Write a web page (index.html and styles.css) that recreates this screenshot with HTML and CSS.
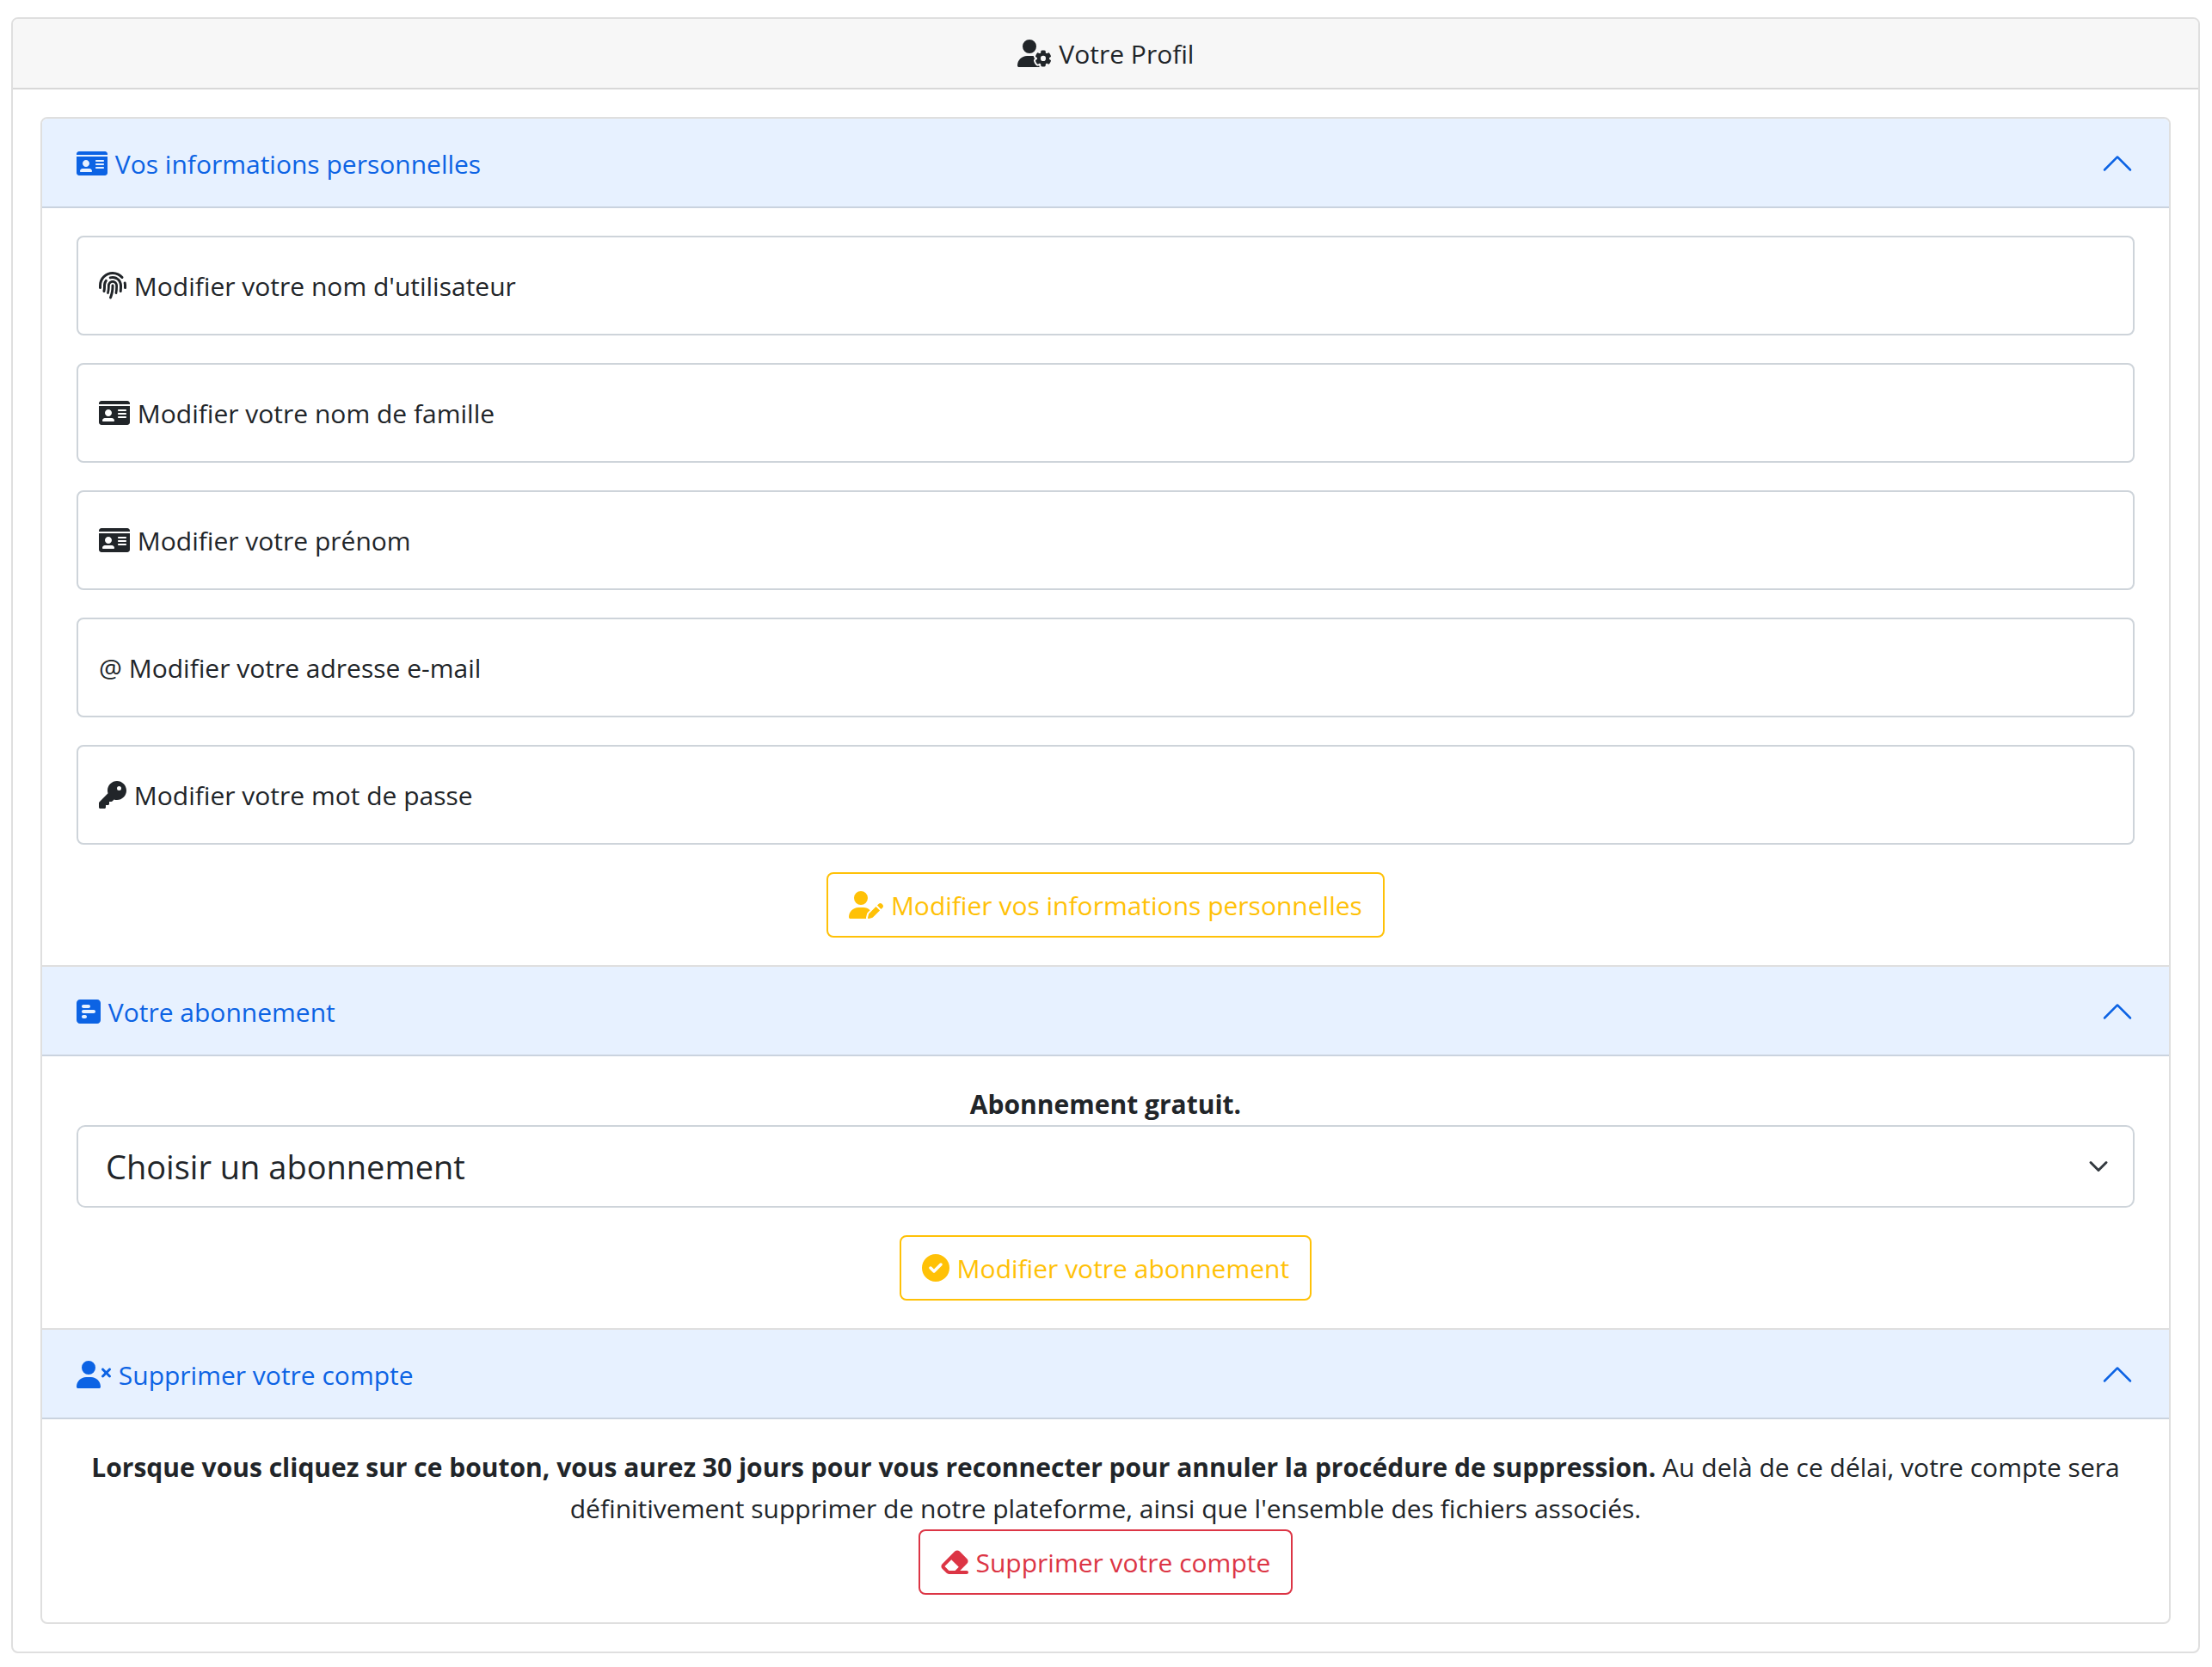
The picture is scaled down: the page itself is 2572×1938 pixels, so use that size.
FILE: index.html
```html
<!DOCTYPE html>
<html lang="fr">
<head>
<meta charset="utf-8">
<title>Votre Profil</title>
<link rel="stylesheet" href="styles.css">
</head>
<body>
<svg class="sprite" aria-hidden="true">
  <symbol id="user-gear" viewBox="0 0 640 512"><path d="M224 0a128 128 0 1 1 0 256A128 128 0 1 1 224 0zM178.3 304h91.4c11.8 0 23.4 1.2 34.5 3.3c-2.1 18.5 7.4 35.6 21.8 44.8c-16.6 10.6-26.7 31.6-20 53.3c4 12.9 9.4 25.5 16.4 37.6s15.2 23.1 24.4 33c15.7 16.9 39.6 18.4 57.2 8.7v.9c0 9.2 2.7 18.5 7.9 26.3H29.7C13.3 512 0 498.7 0 482.3C0 383.8 79.8 304 178.3 304zM436 218.2c0-7 4.5-13.3 11.3-14.8c10.5-2.4 21.5-3.7 32.7-3.7s22.2 1.3 32.7 3.7c6.8 1.5 11.3 7.8 11.3 14.8v17.7c0 7.8 4.8 14.8 11.6 18.7c6.8 3.9 15.1 4.5 21.8 .6l13.8-7.9c6.1-3.5 13.7-2.7 18.5 2.4c7.6 8.1 14.3 17.2 20.1 27.2s10.3 20.4 13.5 31c2.1 6.7-1.1 13.7-7.2 17.2l-14.4 8.3c-6.5 3.7-10 10.9-10 18.4s3.5 14.7 10 18.4l14.4 8.3c6.1 3.5 9.2 10.5 7.2 17.2c-3.3 10.6-7.8 21-13.5 31s-12.5 19.1-20.1 27.2c-4.8 5.1-12.5 5.9-18.5 2.4l-13.8-7.9c-6.7-3.9-15.1-3.3-21.8 .6c-6.8 3.9-11.6 10.9-11.6 18.7v17.7c0 7-4.5 13.3-11.3 14.8c-10.5 2.4-21.5 3.7-32.7 3.7s-22.2-1.3-32.7-3.7c-6.8-1.5-11.3-7.8-11.3-14.8V467.8c0-7.9-4.9-14.9-11.7-18.9c-6.8-3.9-15.2-4.5-22-.6l-13.5 7.8c-6.1 3.5-13.7 2.7-18.5-2.4c-7.6-8.1-14.3-17.2-20.1-27.2s-10.3-20.4-13.5-31c-2.1-6.7 1.1-13.7 7.2-17.2l14-8.1c6.5-3.8 10.1-11.1 10.1-18.6s-3.5-14.8-10.1-18.6l-14-8.1c-6.1-3.5-9.2-10.5-7.2-17.2c3.3-10.6 7.7-21 13.5-31s12.5-19.1 20.1-27.2c4.8-5.1 12.4-5.9 18.5-2.4l13.6 7.8c6.8 3.9 15.2 3.3 22-.6c6.9-3.9 11.7-11 11.7-18.9V218.2zm92.1 133.5a48.1 48.1 0 1 0 -96.1 0 48.1 48.1 0 1 0 96.1 0z"/></symbol>
  <symbol id="id-card" viewBox="0 0 576 512"><path d="M528 32h-480C21.49 32 0 53.49 0 80V96h576V80C576 53.49 554.5 32 528 32zM0 432C0 458.5 21.49 480 48 480h480c26.51 0 48-21.49 48-48V128H0V432zM368 192h128C504.8 192 512 199.2 512 208S504.8 224 496 224h-128C359.2 224 352 216.8 352 208S359.2 192 368 192zM368 256h128C504.8 256 512 263.2 512 272S504.8 288 496 288h-128C359.2 288 352 280.8 352 272S359.2 256 368 256zM368 320h128c8.836 0 16 7.164 16 16S504.8 352 496 352h-128c-8.836 0-16-7.164-16-16S359.2 320 368 320zM176 192c35.35 0 64 28.66 64 64s-28.65 64-64 64s-64-28.66-64-64S140.7 192 176 192zM112 352h128c26.51 0 48 21.49 48 48c0 8.836-7.164 16-16 16h-192C71.16 416 64 408.8 64 400C64 373.5 85.49 352 112 352z"/></symbol>
  <symbol id="fingerprint" viewBox="0 0 512 512"><path d="M48 256C48 141.1 141.1 48 256 48c63.1 0 119.6 28.1 157.8 72.5c8.6 10.1 23.8 11.2 33.8 2.6s11.2-23.8 2.6-33.8C403.3 34.6 333.7 0 256 0C114.6 0 0 114.6 0 256v40c0 13.3 10.7 24 24 24s24-10.7 24-24V256zm458.5-52.9c-2.7-13-15.5-21.3-28.4-18.5s-21.3 15.5-18.5 28.4c2.9 13.9 4.5 28.3 4.5 43.1v40c0 13.3 10.7 24 24 24s24-10.7 24-24V256c0-18.1-1.9-35.8-5.5-52.9zM256 80c-19 0-37.4 3-54.5 8.6c-15.2 5-18.7 23.7-8.3 35.9c7.1 8.3 18.8 10.8 29.4 7.9c10.6-2.9 21.8-4.4 33.4-4.4c70.7 0 128 57.3 128 128v24.9c0 25.2-1.5 50.3-4.4 75.3c-1.7 14.6 9.4 27.8 24.2 27.8c11.8 0 21.9-8.6 23.3-20.3c3.3-27.4 5-55 5-82.7V256c0-97.2-78.8-176-176-176zM150.7 148.7c-9.1-10.6-25.3-11.4-33.9-.4C93.7 178 80 215.4 80 256v24.9c0 24.2-2.6 48.4-7.8 71.9C68.8 368.4 80.1 384 96.1 384c10.5 0 19.9-7 22.2-17.3c6.4-28.1 9.7-56.8 9.7-85.8V256c0-27.2 8.5-52.4 22.9-73.1c7.2-10.4 8-24.6-.2-34.2zM256 160c-53 0-96 43-96 96v24.9c0 35.9-4.6 71.5-13.8 106.1c-3.8 14.3 6.7 29 21.5 29c9.5 0 17.9-6.2 20.4-15.4c10.5-39 15.9-79.2 15.9-119.7V256c0-28.7 23.3-52 52-52s52 23.3 52 52v24.9c0 36.3-3.5 72.4-10.4 107.9c-2.7 13.9 7.7 27.2 21.8 27.2c10.2 0 19-7 21-17c7.7-38.8 11.6-78.3 11.6-118.1V256c0-53-43-96-96-96zm24 96c0-13.3-10.7-24-24-24s-24 10.7-24 24v24.9c0 59.9-11 119.3-32.5 175.2l-5.9 15.3c-4.8 12.4 1.4 26.3 13.8 31s26.3-1.4 31-13.8l5.9-15.3C267.9 411.9 280 346.7 280 280.9V256z"/></symbol>
  <symbol id="key" viewBox="0 0 512 512"><path d="M336 352c97.2 0 176-78.8 176-176S433.2 0 336 0S160 78.8 160 176c0 18.7 2.9 36.8 8.3 53.7L7 391c-4.5 4.5-7 10.6-7 17v80c0 13.3 10.7 24 24 24h80c13.3 0 24-10.7 24-24V448h40c13.3 0 24-10.7 24-24V384h40c6.4 0 12.5-2.5 17-7l33.3-33.3c16.9 5.4 35 8.3 53.7 8.3zM376 96a40 40 0 1 1 0 80 40 40 0 1 1 0-80z"/></symbol>
  <symbol id="user-pen" viewBox="0 0 640 512"><path d="M224 256A128 128 0 1 0 224 0a128 128 0 1 0 0 256zm-45.7 48C79.8 304 0 383.8 0 482.3C0 498.7 13.3 512 29.7 512H322.8c-3.1-8.8-3.7-18.4-1.4-27.8l15-60.1c2.8-11.3 8.6-21.5 16.8-29.7l40.3-40.3c-32.1-31-75.7-50.1-123.9-50.1H178.3zm435.5-68.3c-15.6-15.6-40.9-15.6-56.6 0l-29.4 29.4 71 71 29.4-29.4c15.6-15.6 15.6-40.9 0-56.6l-14.4-14.4zM375.9 417c-4.1 4.1-7 9.2-8.4 14.9l-15 60.1c-1.4 5.5 .2 11.2 4.2 15.2s9.7 5.6 15.2 4.2l60.1-15c5.6-1.4 10.8-4.3 14.9-8.4L576.1 358.7l-71-71L375.9 417z"/></symbol>
  <symbol id="poll" viewBox="0 0 448 512"><path d="M448 96c0-35.3-28.7-64-64-64L64 32C28.7 32 0 60.7 0 96L0 416c0 35.3 28.7 64 64 64l320 0c35.3 0 64-28.7 64-64l0-320zM256 160c0 17.7-14.3 32-32 32l-96 0c-17.7 0-32-14.3-32-32s14.3-32 32-32l96 0c17.7 0 32 14.3 32 32zm64 64c17.7 0 32 14.3 32 32s-14.3 32-32 32l-192 0c-17.7 0-32-14.3-32-32s14.3-32 32-32l192 0zM192 352c0 17.7-14.3 32-32 32l-32 0c-17.7 0-32-14.3-32-32s14.3-32 32-32l32 0c17.7 0 32 14.3 32 32z"/></symbol>
  <symbol id="circle-check" viewBox="0 0 512 512"><path d="M256 512A256 256 0 1 0 256 0a256 256 0 1 0 0 512zM371.8 211.8C382.7 200.9 382.7 183.1 371.8 172.2C360.9 161.3 343.1 161.3 332.2 172.2L224 280.4L179.8 236.2C168.9 225.3 151.1 225.3 140.2 236.2C129.3 247.1 129.3 264.9 140.2 275.8L204.2 339.8C215.1 350.7 232.9 350.7 243.8 339.8L371.8 211.8z" fill-rule="evenodd"/></symbol>
  <symbol id="user-xmark" viewBox="0 0 640 512"><path d="M96 128a128 128 0 1 1 256 0A128 128 0 1 1 96 128zM0 482.3C0 383.8 79.8 304 178.3 304h91.4C368.2 304 448 383.8 448 482.3c0 16.4-13.3 29.7-29.7 29.7H29.7C13.3 512 0 498.7 0 482.3zM471 143c9.4-9.4 24.6-9.4 33.9 0l47 47 47-47c9.4-9.4 24.6-9.4 33.9 0s9.4 24.6 0 33.9l-47 47 47 47c9.4 9.4 9.4 24.6 0 33.9s-24.6 9.4-33.9 0l-47-47-47 47c-9.4 9.4-24.6 9.4-33.9 0s-9.4-24.6 0-33.9l47-47-47-47c-9.4-9.4-9.4-24.6 0-33.9z"/></symbol>
  <symbol id="eraser" viewBox="0 0 512 512"><path d="M480 416C497.7 416 512 430.3 512 448C512 465.7 497.7 480 480 480H150.6C133.7 480 117.4 473.3 105.4 461.3L25.37 381.3C.3786 356.3 .3786 315.7 25.37 290.7L258.7 57.37C283.7 32.38 324.3 32.38 349.3 57.37L486.6 194.7C511.6 219.7 511.6 260.3 486.6 285.3L355.9 416H480zM265.4 416L332.7 348.7L195.3 211.3L70.63 336L150.6 416L265.4 416z" fill-rule="evenodd"/></symbol>
  <symbol id="chevron" viewBox="0 0 16 16"><path fill-rule="evenodd" d="M14.354 11.354a.5.5 0 0 1-.708 0L8 5.707l-5.646 5.647a.5.5 0 0 1-.708-.708l6-6a.5.5 0 0 1 .708 0l6 6a.5.5 0 0 1 0 .708z"/></symbol>
</svg>

<main class="card">
  <h1 class="card-header"><svg class="icon icon-xl"><use href="#user-gear"/></svg> Votre Profil</h1>
  <div class="card-body">
    <div class="accordion">

      <section class="accordion-item">
        <h2 class="accordion-header">
          <button class="accordion-button" type="button" aria-expanded="true" aria-controls="panel-infos">
            <span class="accordion-title"><svg class="icon icon-lg"><use href="#id-card"/></svg> Vos informations personnelles</span>
            <svg class="chevron"><use href="#chevron"/></svg>
          </button>
        </h2>
        <form class="accordion-body fields" id="panel-infos">
          <div class="field">
            <input class="field-input" type="text" id="username">
            <label class="field-label" for="username"><svg class="icon"><use href="#fingerprint"/></svg> Modifier votre nom d'utilisateur</label>
          </div>
          <div class="field">
            <input class="field-input" type="text" id="lastname">
            <label class="field-label" for="lastname"><svg class="icon icon-lg"><use href="#id-card"/></svg> Modifier votre nom de famille</label>
          </div>
          <div class="field">
            <input class="field-input" type="text" id="firstname">
            <label class="field-label" for="firstname"><svg class="icon icon-lg"><use href="#id-card"/></svg> Modifier votre prénom</label>
          </div>
          <div class="field">
            <input class="field-input" type="email" id="email">
            <label class="field-label" for="email">@ Modifier votre adresse e-mail</label>
          </div>
          <div class="field">
            <input class="field-input" type="password" id="password">
            <label class="field-label" for="password"><svg class="icon"><use href="#key"/></svg> Modifier votre mot de passe</label>
          </div>
          <button class="btn btn-warning" type="submit"><svg class="icon icon-xl"><use href="#user-pen"/></svg> Modifier vos informations personnelles</button>
        </form>
      </section>

      <section class="accordion-item">
        <h2 class="accordion-header">
          <button class="accordion-button" type="button" aria-expanded="true" aria-controls="panel-plan">
            <span class="accordion-title"><svg class="icon icon-sm"><use href="#poll"/></svg> Votre abonnement</span>
            <svg class="chevron"><use href="#chevron"/></svg>
          </button>
        </h2>
        <form class="accordion-body" id="panel-plan">
          <label class="plan-label" for="plan">Abonnement gratuit.</label>
          <select class="select" id="plan">
            <option>Choisir un abonnement</option>
          </select>
          <button class="btn btn-warning" type="submit"><svg class="icon"><use href="#circle-check"/></svg> Modifier votre abonnement</button>
        </form>
      </section>

      <section class="accordion-item">
        <h2 class="accordion-header">
          <button class="accordion-button" type="button" aria-expanded="true" aria-controls="panel-delete">
            <span class="accordion-title"><svg class="icon icon-xl"><use href="#user-xmark"/></svg> Supprimer votre compte</span>
            <svg class="chevron"><use href="#chevron"/></svg>
          </button>
        </h2>
        <div class="accordion-body" id="panel-delete">
          <p class="notice"><strong>Lorsque vous cliquez sur ce bouton, vous aurez 30 jours pour vous reconnecter pour annuler la procédure de suppression.</strong> Au delà de ce délai, votre compte sera définitivement supprimer de notre plateforme, ainsi que l'ensemble des fichiers associés.</p>
          <button class="btn btn-danger" type="button"><svg class="icon"><use href="#eraser"/></svg> Supprimer votre compte</button>
        </div>
      </section>

    </div>
  </div>
</main>
</body>
</html>
```
FILE: styles.css
```css
*,
*::before,
*::after {
  box-sizing: border-box;
}

body {
  margin: 0;
  padding: 20px 14px 16px 13px;
  background: #fff;
  color: #212529;
  font-family: "Open Sans", "Noto Sans", sans-serif;
  font-size: 30px;
  line-height: 48px;
}

h1,
h2,
p {
  margin: 0;
  font-size: inherit;
  font-weight: 400;
}

button,
input,
select {
  margin: 0;
  font: inherit;
  color: inherit;
}

.sprite {
  display: none;
}

.icon {
  width: 32px;
  height: 32px;
  margin-right: 1px;
  fill: currentColor;
  vertical-align: -4px;
}

.icon-sm {
  width: 28px;
}

.icon-lg {
  width: 36px;
}

.icon-xl {
  width: 40px;
}

.card {
  border: 2px solid #dfdfdf;
  border-radius: 8px;
  overflow: hidden;
}

.card-header {
  padding: 17px 32px 15px;
  border-bottom: 2px solid #d8d8d8;
  background: #f7f7f7;
  text-align: center;
}

.card-body {
  padding: 32px;
}

.accordion {
  border: 2px solid #dfdfdf;
  border-radius: 8px;
  overflow: hidden;
}

.accordion-item + .accordion-item {
  border-top: 2px solid #dfdfdf;
}

.accordion-button {
  display: flex;
  align-items: center;
  justify-content: space-between;
  width: 100%;
  height: 104px;
  padding: 0 40px;
  border: 0;
  background: #e7f1ff;
  box-shadow: inset 0 -2px 0 #cad3df;
  color: #0c63e4;
  text-align: left;
}

.accordion-title {
  padding-top: 2px;
}

.chevron {
  flex: none;
  width: 40px;
  height: 40px;
  fill: currentColor;
}

.accordion-body {
  display: flex;
  flex-direction: column;
  align-items: center;
  padding: 32px 40px;
}

.fields {
  gap: 32px;
}

.field {
  display: grid;
  align-items: center;
  align-self: stretch;
}

.field-input,
.field-label {
  grid-area: 1 / 1;
}

.field-input {
  width: 100%;
  height: 116px;
  padding: 32px 24px;
  border: 2px solid #ced4da;
  border-radius: 8px;
  background: #fff;
}

.field-label {
  padding: 2px 26px 0;
  pointer-events: none;
}

.btn {
  padding: 13px 24px 11px;
  border: 2px solid currentColor;
  border-radius: 8px;
  background: transparent;
}

.btn-warning {
  color: #ffc107;
}

.btn-danger {
  color: #dc3545;
}

.plan-label {
  font-weight: 700;
}

.select {
  appearance: none;
  width: 100%;
  margin-bottom: 32px;
  padding: 16px 96px 16px 32px;
  border: 2px solid #ced4da;
  border-radius: 10px;
  background: #fff url("data:image/svg+xml,%3csvg xmlns='http://www.w3.org/2000/svg' viewBox='0 0 16 16'%3e%3cpath fill='none' stroke='%23343a40' stroke-linecap='round' stroke-linejoin='round' stroke-width='2' d='m2 5 6 6 6-6'/%3e%3c/svg%3e") no-repeat right 24px center / 32px 24px;
  font-size: 38px;
  line-height: 60px;
}

.notice {
  text-align: center;
}
```
